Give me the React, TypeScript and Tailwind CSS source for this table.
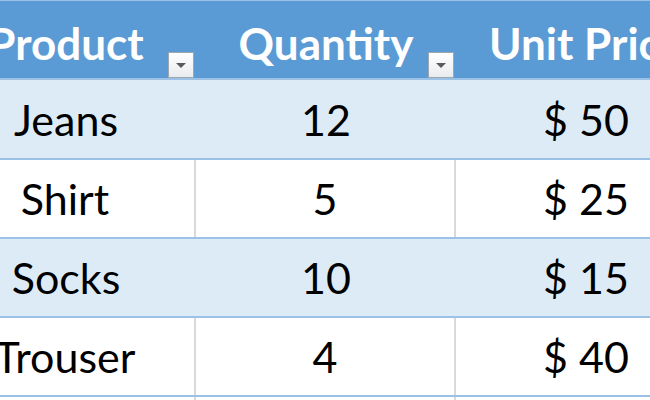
const rows = [
  { product: 'Jeans', qty: 12, price: 50 },
  { product: 'Shirt', qty: 5, price: 25 },
  { product: 'Socks', qty: 10, price: 15 },
  { product: 'Trouser', qty: 4, price: 40 },
]

function FilterButton() {
  return (
    <div className="absolute right-[2px] bottom-0 w-[26px] h-[26px] border border-[#9ea7b0] bg-gradient-to-b from-white to-[#e9ecef] flex items-center justify-center">
      <svg width="10" height="5" viewBox="0 0 10 5">
        <path d="M0 0 L10 0 L5 5 Z" fill="#5a5a5a" />
      </svg>
    </div>
  )
}

export default function App() {
  return (
    <div
      className="w-[650px] h-[400px] overflow-hidden bg-white"
      style={{ fontFamily: 'Lato, "Open Sans", sans-serif' }}
    >
      <div className="-ml-[64px] w-[780px]">
        {/* Header */}
        <div className="flex h-[80px] bg-[#5b9bd5] border-t border-b-2 border-[#9bc2e6] text-white font-bold text-[44px]">
          {['Product', 'Quantity', 'Unit Price'].map((h, i) => (
            <div key={h} className="relative w-[260px] flex items-center justify-center pt-[6px]">
              <span className="leading-none">{h}</span>
              {i < 2 && <FilterButton />}
            </div>
          ))}
        </div>

        {/* Body */}
        {rows.map((r, idx) => {
          const band = idx % 2 === 0
          return (
            <div
              key={r.product}
              className={`flex border-b-2 border-[#9bc2e6] text-black text-[43px] ${idx === 0 ? 'h-[80px]' : 'h-[79px]'} ${band ? 'bg-[#ddebf7]' : 'bg-white'}`}
            >
              <div className={`w-[260px] flex items-center justify-center ${band ? '' : 'border-r-2 border-[#d9d9d9]'}`}>
                <span className="leading-none">{r.product}</span>
              </div>
              <div className={`w-[260px] flex items-center justify-center ${band ? '' : 'border-r-2 border-[#d9d9d9]'}`}>
                <span className="leading-none">{r.qty}</span>
              </div>
              <div className="w-[260px] flex items-center justify-center">
                <span className="leading-none">$ {r.price}</span>
              </div>
            </div>
          )
        })}
        <div className="flex h-[20px] bg-white">
          <div className="w-[260px] border-r-2 border-[#d9d9d9]" />
          <div className="w-[260px] border-r-2 border-[#d9d9d9]" />
          <div className="w-[260px]" />
        </div>
      </div>
    </div>
  )
}
